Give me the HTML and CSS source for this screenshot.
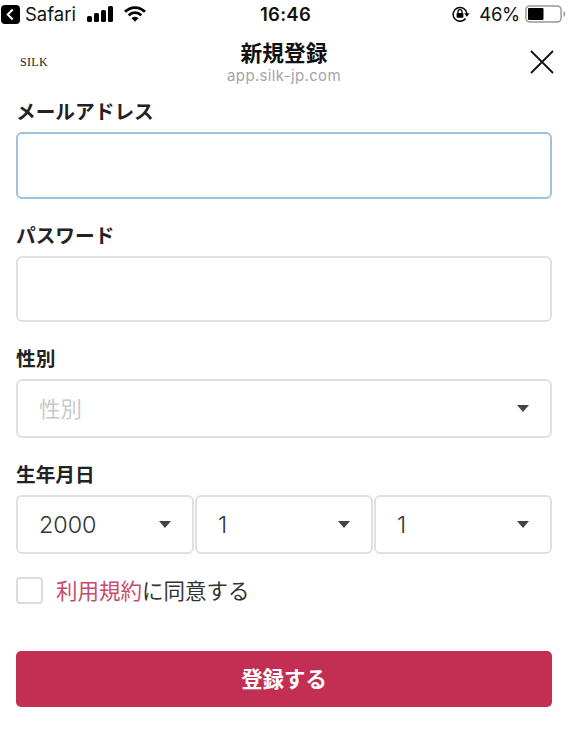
FILE: index.html
```html
<!DOCTYPE html>
<html lang="ja">
<head>
<meta charset="utf-8">
<title>新規登録</title>
<link rel="stylesheet" href="styles.css">
</head>
<body>
<div class="status">
  <div class="status-left">
    <svg class="back" width="19" height="19" viewBox="0 0 19 19"><rect width="19" height="19" rx="4"/><path d="M11.7 4.5 6.7 9.5l5 5" fill="none" stroke="#fff" stroke-width="2"/></svg>
    <span class="safari">Safari</span>
    <svg class="signal" width="27" height="16" viewBox="0 0 27 16"><rect x="0" y="10" width="5" height="6" rx="1.5"/><rect x="7" y="7" width="5" height="9" rx="1.5"/><rect x="14" y="4" width="5" height="12" rx="1.5"/><rect x="21" y="0" width="5" height="16" rx="1.5"/></svg>
    <svg class="wifi" width="22" height="16" viewBox="0 0 22 16"><g fill="none" stroke="#000" stroke-width="2.7"><path d="M1 5.8C6.6.1 15.4.1 21 5.8"/><path d="M4.7 9.4c3.5-3.6 9.1-3.6 12.6 0"/></g><path d="M7.5 12.2c2-2 5-2 7 0L11 15.8z"/></svg>
  </div>
  <span class="clock">16:46</span>
  <div class="status-right">
    <svg class="lock" width="18" height="16" viewBox="0 0 18 16"><path d="M13.6 12.5A6.9 6.9 0 1 1 14.9 7.5" fill="none" stroke="#000" stroke-width="1.5"/><path d="M12.2 7.2h5.4l-2.7 3.6z"/><rect x="4.6" y="7" width="6.8" height="4.8" rx=".7"/><path d="M6 7.2V5.7a2 2 0 0 1 4 0v1.5" fill="none" stroke="#000" stroke-width="1.3"/></svg>
    <span class="percent">46%</span>
    <svg class="battery" width="41" height="18" viewBox="0 0 41 18"><rect x=".9" y=".9" width="35.2" height="16.2" rx="4" fill="#fff" stroke="#999" stroke-width="1.5"/><rect x="3" y="3" width="15.5" height="12" rx="1"/><path d="M38.5 6c2.4.8 2.4 5.2 0 6z" fill="#999"/></svg>
  </div>
</div>
<header class="header">
  <span class="brand">SILK</span>
  <div class="heading">
    <h1>新規登録</h1>
    <span class="host">app.silk-jp.com</span>
  </div>
  <svg class="close" width="24" height="24" viewBox="0 0 24 24"><path d="m1 1 22 22M23 1 1 23" fill="none" stroke="#111" stroke-width="1.8"/></svg>
</header>
<form class="form">
  <div class="field">
    <label for="mail">メールアドレス</label>
    <input class="box text-box active" id="mail" type="email">
  </div>
  <div class="field">
    <label for="pass">パスワード</label>
    <input class="box pass-box" id="pass" type="password">
  </div>
  <div class="field">
    <label>性別</label>
    <div class="box select placeholder"><span>性別</span><i class="caret"></i></div>
  </div>
  <div class="field">
    <label>生年月日</label>
    <div class="birth">
      <div class="box select"><span>2000</span><i class="caret"></i></div>
      <div class="box select"><span>1</span><i class="caret"></i></div>
      <div class="box select"><span>1</span><i class="caret"></i></div>
    </div>
  </div>
  <div class="agree">
    <span class="check"></span>
    <span class="terms"><a>利用規約</a>に同意する</span>
  </div>
  <button class="submit" type="button">登録する</button>
</form>
</body>
</html>
```
FILE: styles.css
```css
* { box-sizing: border-box; }
body {
  margin: 0;
  background: #fff;
  color: #222;
  font-family: Inter, "Noto Sans CJK JP", sans-serif;
}
svg { display: block; flex: none; }
.status {
  display: grid;
  grid-template-columns: 1fr auto 1fr;
  align-items: center;
  height: 28px;
  padding: 0 4px 0 1px;
  color: #111;
}
.status-left, .status-right { display: flex; align-items: center; }
.status-right { justify-content: flex-end; }
.safari { width: 51px; margin-left: 5px; font-size: 18.5px; }
.signal { margin-left: 11px; }
.wifi { margin-left: 10px; }
.clock { padding-left: 4px; font-size: 18.5px; font-weight: 600; letter-spacing: .3px; }
.percent { margin: 0 5px 0 9px; font-size: 18.5px; letter-spacing: -.3px; }
.header {
  display: grid;
  grid-template-columns: 1fr auto 1fr;
  align-items: center;
  height: 69px;
  padding: 0 16px 2px 20px;
}
.brand {
  padding-top: 2px;
  font: 12px "Liberation Serif", serif;
  letter-spacing: .3px;
}
.heading {
  display: flex;
  flex-direction: column;
  align-items: center;
  padding-top: 3px;
  margin-right: 6px;
}
h1 {
  margin: 0;
  color: #111;
  font-size: 21.7px;
  line-height: 25px;
  font-weight: 700;
}
.host { color: #a5a5a5; font-size: 15px; line-height: 20px; letter-spacing: .35px; }
.close { justify-self: end; }
.form {
  display: flex;
  flex-direction: column;
  gap: 22px;
  padding: 0 18px 0 16px;
}
.field { display: flex; flex-direction: column; gap: 7px; }
label { padding-top: 2px; font-size: 19.7px; line-height: 26px; font-weight: 700; }
.box {
  width: 100%;
  border: 2px solid #e0e0e0;
  border-radius: 6px;
  background: #fff;
  outline: none;
}
.text-box { height: 67px; }
.pass-box { height: 66px; }
.active { border-color: #9dc3dc; }
.select {
  display: flex;
  align-items: center;
  justify-content: space-between;
  height: 59px;
  padding: 0 21px 0 21px;
  color: #333;
  font-size: 23.3px;
  font-weight: 300;
}
.placeholder { color: #c9c9c9; font-size: 21.4px; font-weight: 400; }
.placeholder span { padding-bottom: 3px; }
.caret {
  border: 6px solid transparent;
  border-top: 7px solid #444;
  border-bottom: 0;
}
.birth { display: grid; grid-template-columns: repeat(3, 1fr); gap: 1px; }
.agree { display: flex; align-items: center; gap: 13px; height: 28px; }
.check {
  width: 27px;
  height: 27px;
  border: 2px solid #dcdcdc;
  border-radius: 4px;
}
.terms { padding-top: 1px; color: #333; font-size: 21.5px; line-height: 28px; }
.terms a { color: #c94b6b; }
.submit {
  height: 56px;
  margin-top: 25px;
  padding: 0 0 4px;
  border: 0;
  border-radius: 5px;
  background: #c22f52;
  color: #fff;
  font: 700 21.4px "Noto Sans CJK JP", sans-serif;
}
```
